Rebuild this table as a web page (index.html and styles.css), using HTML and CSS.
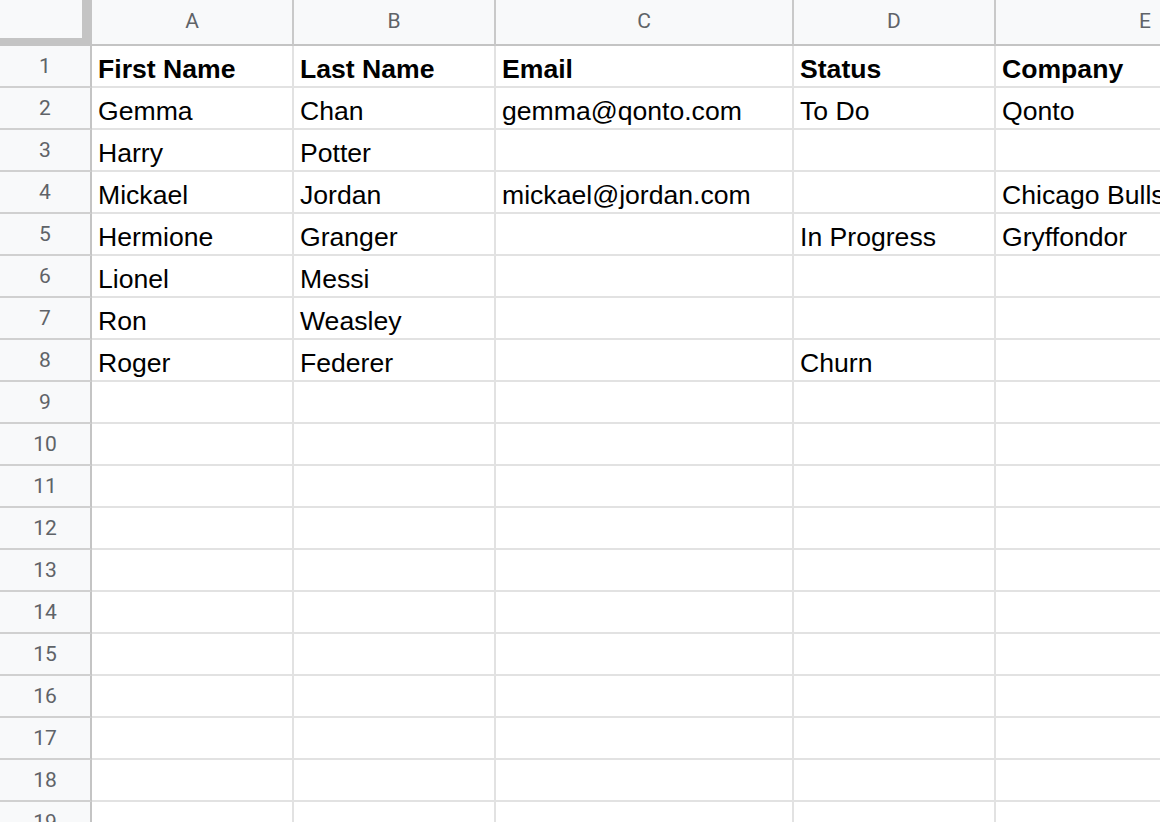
FILE: index.html
```html
<!DOCTYPE html>
<html>
<head>
<meta charset="utf-8">
<link rel="stylesheet" href="styles.css">
</head>
<body>
<div class="sheet">
  <div class="corner"></div>
  <div class="colhdr">A</div>
  <div class="colhdr">B</div>
  <div class="colhdr">C</div>
  <div class="colhdr">D</div>
  <div class="colhdr">E</div>

  <div class="rowhdr">1</div>
  <div class="cell bold">First Name</div>
  <div class="cell bold">Last Name</div>
  <div class="cell bold">Email</div>
  <div class="cell bold">Status</div>
  <div class="cell bold">Company</div>

  <div class="rowhdr">2</div>
  <div class="cell">Gemma</div>
  <div class="cell">Chan</div>
  <div class="cell">gemma@qonto.com</div>
  <div class="cell">To Do</div>
  <div class="cell">Qonto</div>

  <div class="rowhdr">3</div>
  <div class="cell">Harry</div>
  <div class="cell">Potter</div>
  <div class="cell"></div>
  <div class="cell"></div>
  <div class="cell"></div>

  <div class="rowhdr">4</div>
  <div class="cell">Mickael</div>
  <div class="cell">Jordan</div>
  <div class="cell">mickael@jordan.com</div>
  <div class="cell"></div>
  <div class="cell">Chicago Bulls</div>

  <div class="rowhdr">5</div>
  <div class="cell">Hermione</div>
  <div class="cell">Granger</div>
  <div class="cell"></div>
  <div class="cell">In Progress</div>
  <div class="cell">Gryffondor</div>

  <div class="rowhdr">6</div>
  <div class="cell">Lionel</div>
  <div class="cell">Messi</div>
  <div class="cell"></div>
  <div class="cell"></div>
  <div class="cell"></div>

  <div class="rowhdr">7</div>
  <div class="cell">Ron</div>
  <div class="cell">Weasley</div>
  <div class="cell"></div>
  <div class="cell"></div>
  <div class="cell"></div>

  <div class="rowhdr">8</div>
  <div class="cell">Roger</div>
  <div class="cell">Federer</div>
  <div class="cell"></div>
  <div class="cell">Churn</div>
  <div class="cell"></div>

  <div class="rowhdr">9</div><div class="cell"></div><div class="cell"></div><div class="cell"></div><div class="cell"></div><div class="cell"></div>
  <div class="rowhdr">10</div><div class="cell"></div><div class="cell"></div><div class="cell"></div><div class="cell"></div><div class="cell"></div>
  <div class="rowhdr">11</div><div class="cell"></div><div class="cell"></div><div class="cell"></div><div class="cell"></div><div class="cell"></div>
  <div class="rowhdr">12</div><div class="cell"></div><div class="cell"></div><div class="cell"></div><div class="cell"></div><div class="cell"></div>
  <div class="rowhdr">13</div><div class="cell"></div><div class="cell"></div><div class="cell"></div><div class="cell"></div><div class="cell"></div>
  <div class="rowhdr">14</div><div class="cell"></div><div class="cell"></div><div class="cell"></div><div class="cell"></div><div class="cell"></div>
  <div class="rowhdr">15</div><div class="cell"></div><div class="cell"></div><div class="cell"></div><div class="cell"></div><div class="cell"></div>
  <div class="rowhdr">16</div><div class="cell"></div><div class="cell"></div><div class="cell"></div><div class="cell"></div><div class="cell"></div>
  <div class="rowhdr">17</div><div class="cell"></div><div class="cell"></div><div class="cell"></div><div class="cell"></div><div class="cell"></div>
  <div class="rowhdr">18</div><div class="cell"></div><div class="cell"></div><div class="cell"></div><div class="cell"></div><div class="cell"></div>
  <div class="rowhdr">19</div><div class="cell"></div><div class="cell"></div><div class="cell"></div><div class="cell"></div><div class="cell"></div>
</div>
</body>
</html>
```

FILE: styles.css
```css
html, body {
  margin: 0;
  padding: 0;
  background: #ffffff;
  overflow: hidden;
}

.sheet {
  width: 1160px;
  height: 822px;
  overflow: hidden;
  display: grid;
  grid-template-columns: 92px 202px 202px 298px 202px 300px;
  grid-template-rows: 46px;
  grid-auto-rows: 42px;
}

.corner {
  box-sizing: border-box;
  background: #f8f9fa;
  border-right: 10px solid #c4c4c4;
  border-bottom: 8px solid #c4c4c4;
}

.colhdr {
  box-sizing: border-box;
  background: #f8f9fa;
  border-right: 2px solid #c9c9c9;
  border-bottom: 2px solid #c4c4c4;
  display: flex;
  align-items: center;
  justify-content: center;
  padding-bottom: 2px;
  font-family: Roboto, "Liberation Sans", sans-serif;
  font-size: 21px;
  color: #5f6368;
}

.rowhdr {
  box-sizing: border-box;
  background: #f8f9fa;
  border-right: 2px solid #c4c4c4;
  border-bottom: 2px solid #d0d0d0;
  display: flex;
  align-items: center;
  justify-content: center;
  font-family: Roboto, "Liberation Sans", sans-serif;
  font-size: 21px;
  color: #5f6368;
}

.cell {
  box-sizing: border-box;
  border-right: 2px solid #e2e2e2;
  border-bottom: 2px solid #e2e2e2;
  display: flex;
  align-items: flex-end;
  padding: 0 0 1px 6px;
  overflow: hidden;
  white-space: nowrap;
  font-family: "Liberation Sans", Arial, sans-serif;
  font-size: 26.6px;
  color: #000000;
}

.bold {
  font-weight: bold;
}
```
